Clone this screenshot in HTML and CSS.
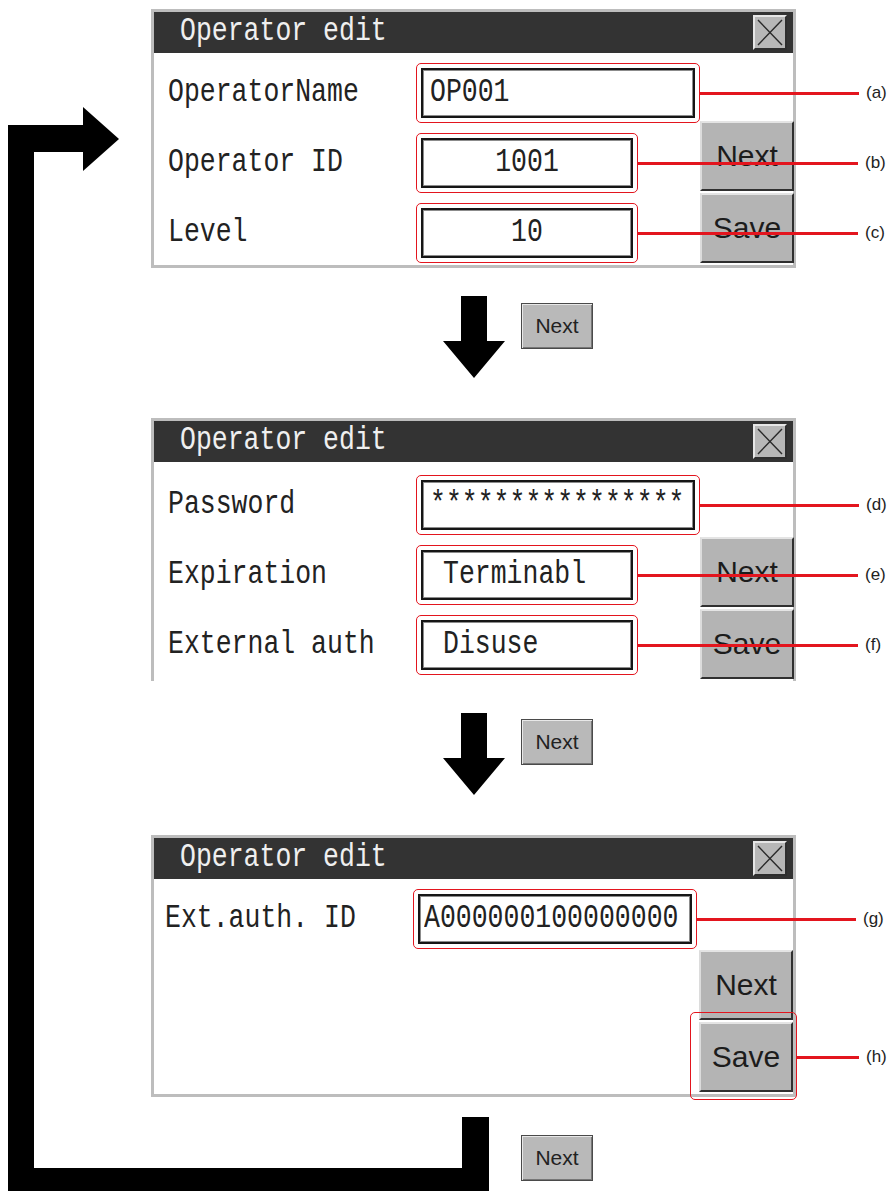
FILE: index.html
```html
<!DOCTYPE html>
<html>
<head>
    <meta charset="utf-8">
    <link rel="stylesheet" href="styles.css">
    <title>Operator edit</title>
</head>
<body>
<div class="page">
    <!-- return path from the last screen back to the first -->
    <svg class="loop" width="893" height="1191" viewBox="0 0 893 1191">
        <polygon points="462,1117 489,1117 489,1191 8,1191 8,125 83,125 83,107 119,139 83,171 83,152 34,152 34,1168 462,1168"/>
    </svg>

    <div class="screen first">
        <div class="titlebar">
            <span class="mono">Operator edit</span>
            <span class="close"><svg width="30" height="31" viewBox="0 0 30 31"><path d="M3 3L27 28M27 3L3 28"/></svg></span>
        </div>
        <div class="body">
            <div class="fields">
                <div class="row">
                    <span class="label"><span class="mono">OperatorName</span></span>
                    <div class="mark wide"><div class="field"><span class="mono">OP001</span></div><span class="tag">(a)</span></div>
                </div>
                <div class="row">
                    <span class="label"><span class="mono">Operator ID</span></span>
                    <div class="mark narrow"><div class="field center"><span class="mono">1001</span></div><span class="tag">(b)</span></div>
                </div>
                <div class="row">
                    <span class="label"><span class="mono">Level</span></span>
                    <div class="mark narrow"><div class="field center"><span class="mono">10</span></div><span class="tag">(c)</span></div>
                </div>
            </div>
            <div class="keys">
                <div class="key">Next</div>
                <div class="key">Save</div>
            </div>
        </div>
    </div>

    <div class="step">
        <svg class="down" width="62" height="82" viewBox="0 0 62 82"><polygon points="18,0 44,0 44,45 62,45 31,82 0,45 18,45"/></svg>
        <div class="go">Next</div>
    </div>

    <div class="screen second">
        <div class="titlebar">
            <span class="mono">Operator edit</span>
            <span class="close"><svg width="30" height="31" viewBox="0 0 30 31"><path d="M3 3L27 28M27 3L3 28"/></svg></span>
        </div>
        <div class="body">
            <div class="fields">
                <div class="row">
                    <span class="label"><span class="mono">Password</span></span>
                    <div class="mark wide"><div class="field"><span class="mono">****************</span></div><span class="tag">(d)</span></div>
                </div>
                <div class="row">
                    <span class="label"><span class="mono">Expiration</span></span>
                    <div class="mark narrow"><div class="field indent"><span class="mono">Terminabl</span></div><span class="tag">(e)</span></div>
                </div>
                <div class="row">
                    <span class="label"><span class="mono">External auth</span></span>
                    <div class="mark narrow"><div class="field indent"><span class="mono">Disuse</span></div><span class="tag">(f)</span></div>
                </div>
            </div>
            <div class="keys">
                <div class="key">Next</div>
                <div class="key">Save</div>
            </div>
        </div>
    </div>

    <div class="step low">
        <svg class="down" width="62" height="82" viewBox="0 0 62 82"><polygon points="18,0 44,0 44,45 62,45 31,82 0,45 18,45"/></svg>
        <div class="go">Next</div>
    </div>

    <div class="screen third">
        <div class="titlebar">
            <span class="mono">Operator edit</span>
            <span class="close"><svg width="30" height="31" viewBox="0 0 30 31"><path d="M3 3L27 28M27 3L3 28"/></svg></span>
        </div>
        <div class="body">
            <div class="fields">
                <div class="row">
                    <span class="label"><span class="mono">Ext.auth. ID</span></span>
                    <div class="mark wide"><div class="field tight"><span class="mono">A000000100000000</span></div><span class="tag">(g)</span></div>
                </div>
            </div>
            <div class="keys">
                <div class="key">Next</div>
                <div class="key marked">Save<span class="tag">(h)</span></div>
            </div>
        </div>
    </div>

    <div class="step last">
        <span class="spacer"></span>
        <div class="go">Next</div>
    </div>
</div>
</body>
</html>
```

FILE: styles.css
```css
body{
    margin: 0;
    background: #fff;
    font-family: "Liberation Sans", Arial, sans-serif;
}

.page{
    position: relative;
    width: 893px;
    height: 1191px;
    overflow: hidden;
}

.loop{
    position: absolute;
    left: 0;
    top: 0;
}
.loop polygon, .down polygon{
    fill: #000;
}

/* screens */
.screen{
    position: relative;
    margin-left: 151px;
    width: 645px;
    border: 3px solid #bdbdbd;
    box-sizing: border-box;
    background: #fff;
}
.screen.first{
    margin-top: 9px;
}
.screen.second{
    border-bottom: 0;
}

.titlebar{
    height: 41px;
    background: #333;
    color: #efefef;
    display: flex;
    align-items: center;
    justify-content: space-between;
    padding: 0 6px 0 26px;
}

.mono{
    display: inline-block;
    font-family: "Liberation Mono", "DejaVu Sans Mono", monospace;
    font-size: 26.5px;
    line-height: 1;
    transform: scaleY(1.22);
}

.close{
    width: 34px;
    height: 35px;
    box-sizing: border-box;
    background: #b7b7b7;
    border: 2px solid;
    border-color: #e6e6e6 #2e2e2e #2e2e2e #e6e6e6;
    display: flex;
    align-items: center;
    justify-content: center;
}
.close path{
    stroke: #2a2a2a;
    stroke-width: 1.4;
    fill: none;
}

.body{
    display: flex;
}
.first .body{
    height: 212px;
}
.second .body{
    height: 219px;
}
.third .body{
    height: 215px;
}

.fields{
    flex: 1;
    display: flex;
    flex-direction: column;
    gap: 10px;
    padding-top: 10px;
}
.second .fields{
    padding-top: 13px;
}

.row{
    display: flex;
    align-items: center;
    padding-left: 14px;
}
.third .row{
    padding-left: 11px;
}

.label{
    width: 248px;
    color: #222;
}

/* red callouts */
.mark{
    position: relative;
    height: 60px;
    box-sizing: border-box;
    border: 1.5px solid #e3151e;
    border-radius: 5px;
    padding: 4px;
    display: flex;
}
.mark.wide{
    width: 284px;
}
.mark.narrow{
    width: 222px;
}

.tag{
    position: absolute;
    left: 100%;
    top: 50%;
    transform: translateY(-50%);
    display: flex;
    align-items: center;
    font-family: "Liberation Sans", Arial, sans-serif;
    font-size: 17px;
    color: #222;
    white-space: nowrap;
    z-index: 2;
}
.tag::before{
    content: "";
    width: 160px;
    height: 3px;
    background: #e3151e;
    margin-right: 7px;
}
.narrow .tag::before{
    width: 221px;
}

.field{
    flex: 1;
    display: flex;
    align-items: center;
    padding: 0 7px;
    border: 2px solid #161616;
    box-shadow: inset 0 0 0 1px #8c8c8c;
    background: #fff;
    color: #222;
}
.field.center{
    justify-content: center;
}
.field.indent{
    padding-left: 20px;
}
.field.tight{
    padding-left: 4px;
}

/* side keys */
.keys{
    display: flex;
    flex-direction: column;
    justify-content: flex-end;
    gap: 2px;
    padding-bottom: 2px;
}

.key{
    width: 94px;
    height: 70px;
    box-sizing: border-box;
    background: #b4b4b4;
    border: 2px solid;
    border-color: #e4e4e4 #303030 #303030 #dcdcdc;
    display: flex;
    align-items: center;
    justify-content: center;
    font-size: 30px;
    color: #1c1c1c;
}
.key.marked{
    position: relative;
}
.key.marked::before{
    content: "";
    position: absolute;
    top: -12px;
    bottom: -10px;
    left: -11px;
    right: -6px;
    border: 1.5px solid #e3151e;
    border-radius: 5px;
}
.key.marked .tag{
    left: calc(100% + 6px);
}
.key.marked .tag::before{
    width: 62px;
}

/* arrows between screens */
.step{
    display: flex;
    align-items: flex-start;
    gap: 16px;
    height: 150px;
    box-sizing: border-box;
    padding: 28px 0 0 443px;
}
.step.low{
    height: 154px;
    padding-top: 32px;
}
.step.last{
    padding-top: 38px;
}
.spacer{
    width: 62px;
}

.go{
    width: 72px;
    height: 46px;
    margin-top: 7px;
    box-sizing: border-box;
    background: #b9b9b9;
    border: 1px solid #4a4a4a;
    box-shadow: inset 1px 1px 0 #e8e8e8, inset -1px -1px 0 #777;
    display: flex;
    align-items: center;
    justify-content: center;
    font-size: 21px;
    color: #222;
}
.step.low .go{
    margin-top: 6px;
}
.step.last .go{
    margin-top: 0;
}
```
